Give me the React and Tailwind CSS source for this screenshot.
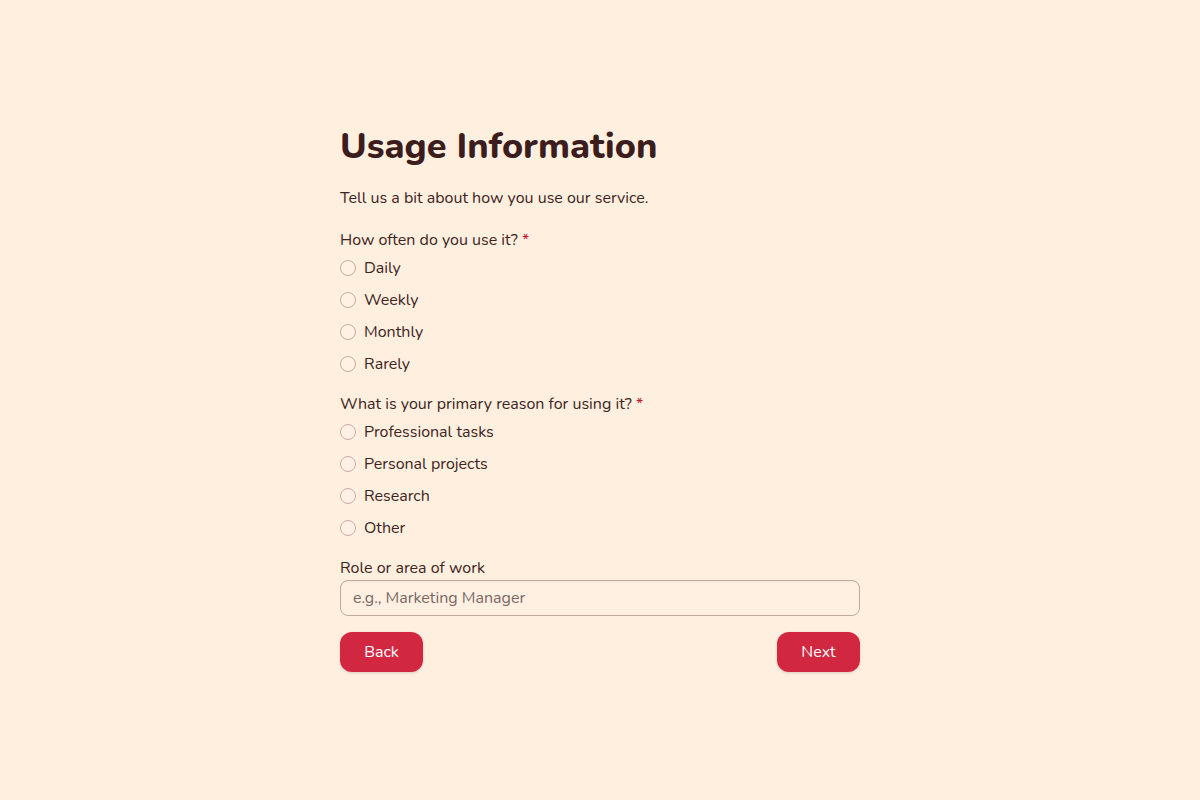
import React from "react";

const font = { fontFamily: 'Nunito, "Noto Sans", Lato, sans-serif' };

function Radio({ label }) {
  return (
    <label className="flex items-center gap-2 h-6 text-[16px] text-[#3d2422] cursor-pointer">
      <span className="w-4 h-4 rounded-full border border-[#c9aca0] bg-[#fff1e4] shrink-0" />
      <span>{label}</span>
    </label>
  );
}

function Group({ title, options }) {
  return (
    <div className="flex flex-col">
      <div className="h-6 leading-6 text-[16px] text-[#3d2422] mb-1">
        {title} <span className="text-[#c8102e]">*</span>
      </div>
      <div className="flex flex-col gap-2">
        {options.map((o) => (
          <Radio key={o} label={o} />
        ))}
      </div>
    </div>
  );
}

export default function App() {
  return (
    <div className="min-h-[800px] w-full bg-[#ffefdf] flex items-center justify-center pb-[2px]" style={font}>
      <div className="w-[520px] flex flex-col">
        <h1 className="text-[36px] leading-[40px] font-extrabold text-[#3b1d1d]">Usage Information</h1>
        <p className="mt-[19px] h-6 leading-6 text-[16px] text-[#3d2422]">
          Tell us a bit about how you use our service.
        </p>
        <div className="mt-[18px]">
          <Group title="How often do you use it?" options={["Daily", "Weekly", "Monthly", "Rarely"]} />
        </div>
        <div className="mt-4">
          <Group
            title="What is your primary reason for using it?"
            options={["Professional tasks", "Personal projects", "Research", "Other"]}
          />
        </div>
        <div className="mt-4 flex flex-col">
          <div className="h-6 leading-6 text-[16px] text-[#3d2422]">Role or area of work</div>
          <input
            className="h-9 w-full rounded-lg border border-[#c3a99d] bg-[#fff0e2] px-3 text-[16px] text-[#3d2422] placeholder:text-[#7b6762] outline-none shadow-[inset_0_1px_2px_rgba(0,0,0,0.05)]"
            placeholder="e.g., Marketing Manager"
            style={font}
          />
        </div>
        <div className="mt-4 flex justify-between">
          <button
            className="h-10 w-[83px] rounded-xl bg-[#d22741] text-white text-[16px] shadow-[0_1px_3px_rgba(0,0,0,0.15)]"
            style={font}
          >
            Back
          </button>
          <button
            className="h-10 w-[83px] rounded-xl bg-[#d22741] text-white text-[16px] shadow-[0_1px_3px_rgba(0,0,0,0.15)]"
            style={font}
          >
            Next
          </button>
        </div>
      </div>
    </div>
  );
}
